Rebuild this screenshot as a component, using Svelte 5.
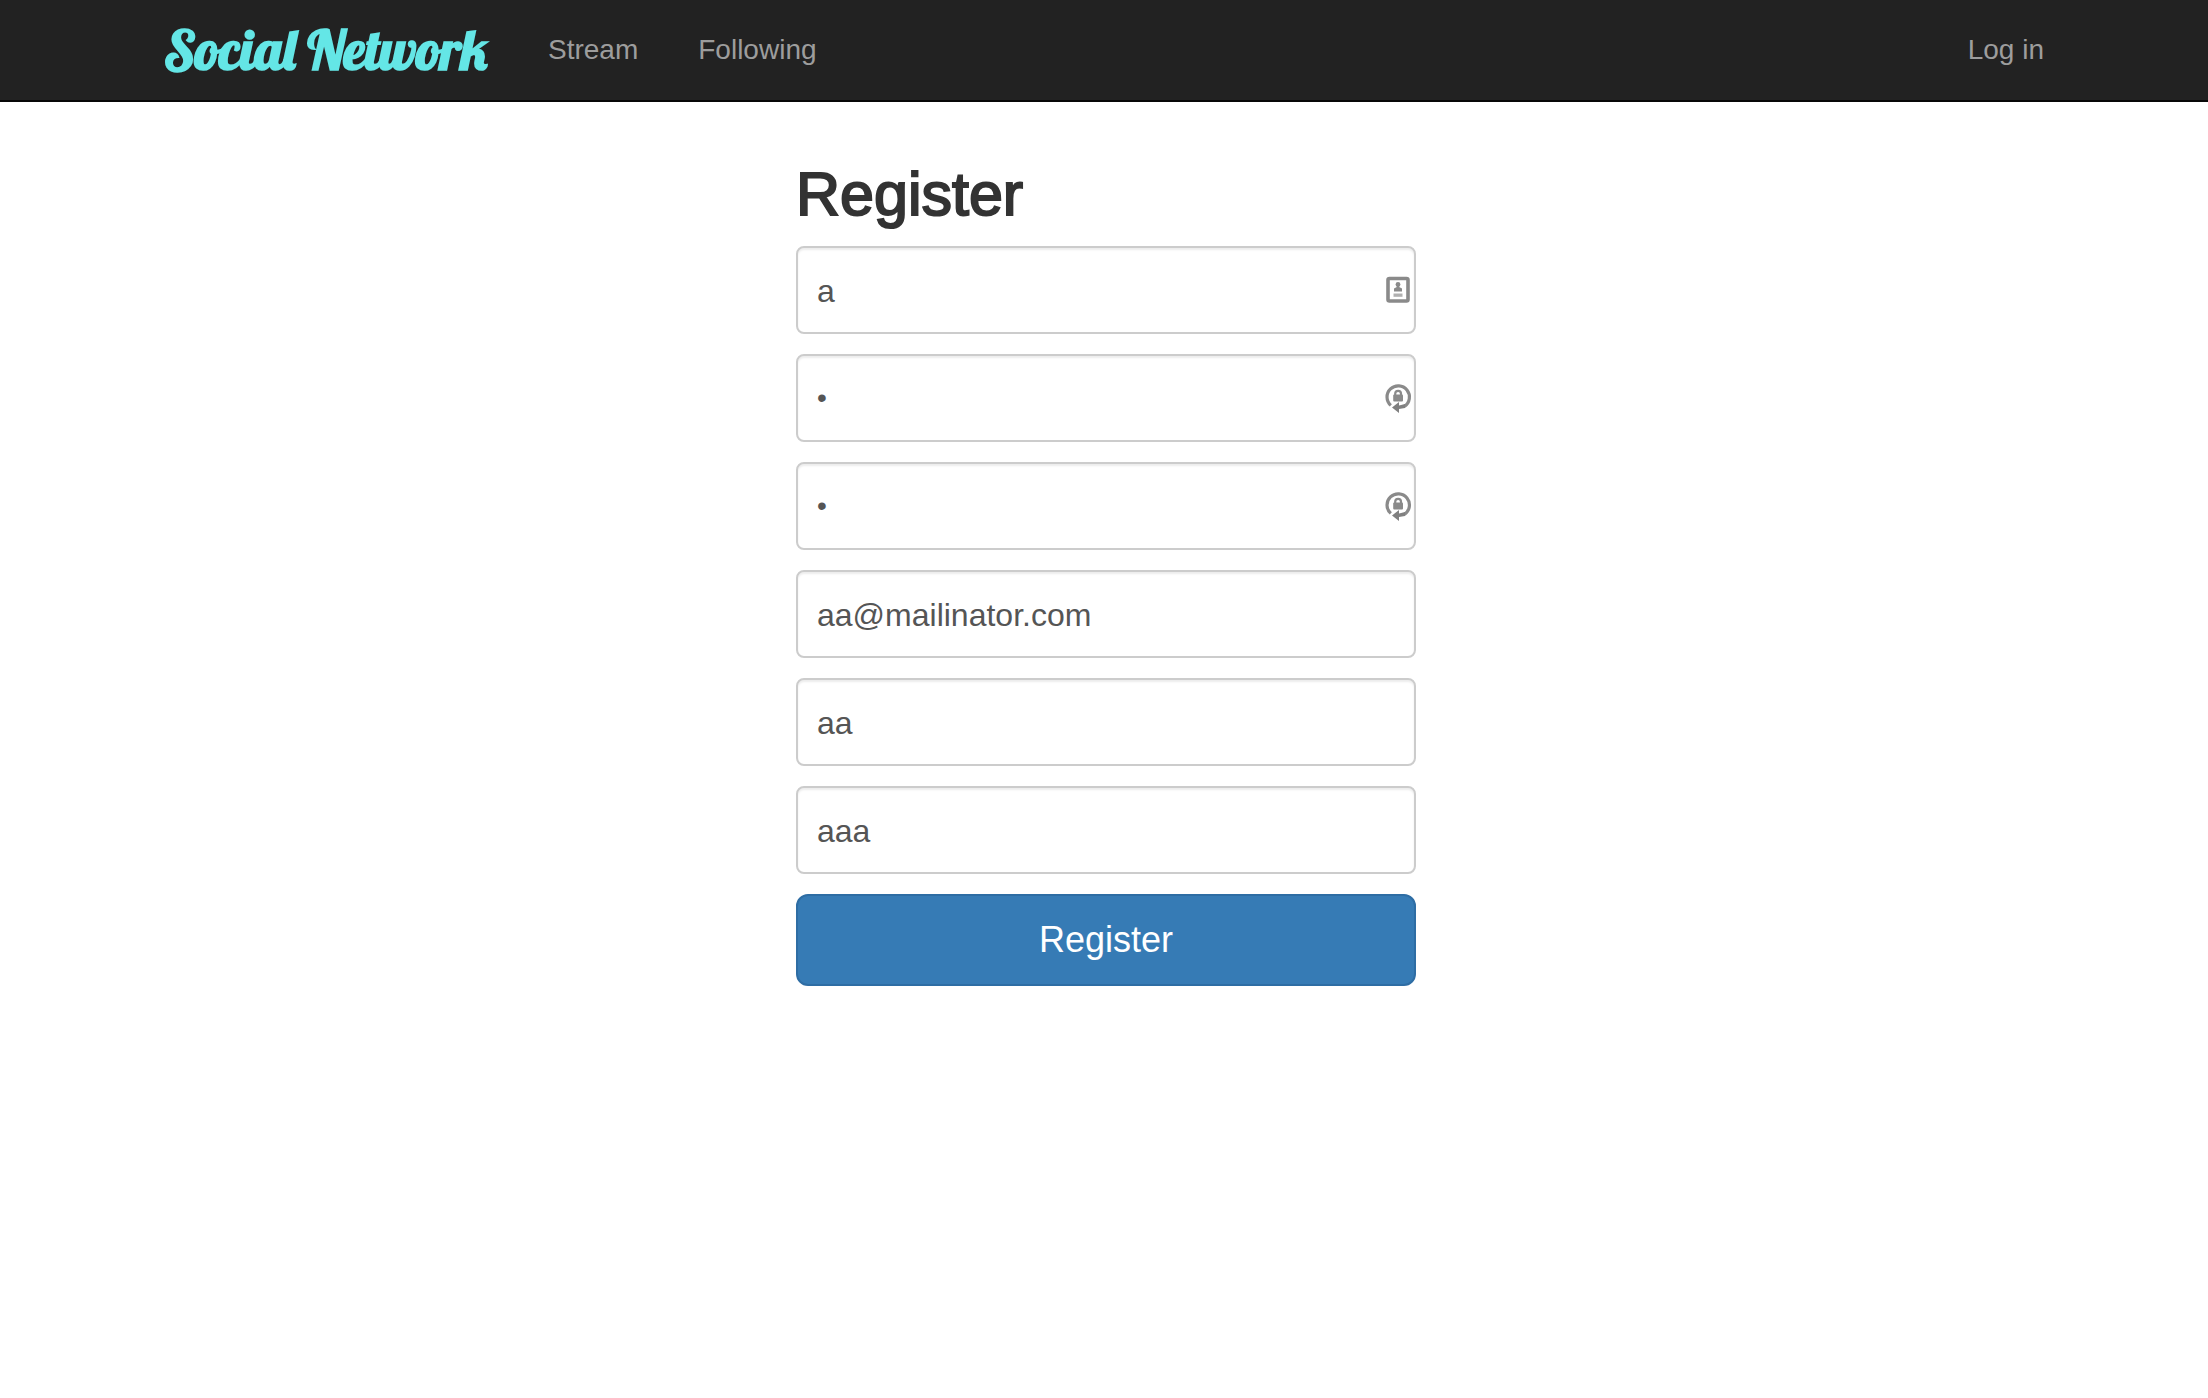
<script>
  let fields = $state([
    { id: 'username', label: 'Username', type: 'text', value: 'a', icon: 'card' },
    { id: 'password', label: 'Password', type: 'password', value: 'a', icon: 'lock' },
    { id: 'confirm', label: 'Confirm password', type: 'password', value: 'a', icon: 'lock' },
    { id: 'email', label: 'Email', type: 'email', value: 'aa@mailinator.com' },
    { id: 'first-name', label: 'First name', type: 'text', value: 'aa' },
    { id: 'last-name', label: 'Last name', type: 'text', value: 'aaa' }
  ]);
</script>

<header class="navbar">
  <nav class="container">
    <a class="brand" href="#home">Social Network</a>
    <a class="link" href="#stream">Stream</a>
    <a class="link" href="#following">Following</a>
    <a class="link login" href="#login">Log in</a>
  </nav>
</header>

<main>
  <form onsubmit={(e) => e.preventDefault()}>
    <h2>Register</h2>
    {#each fields as field (field.id)}
      <div class="field">
        <input
          id={field.id}
          type={field.type}
          aria-label={field.label}
          autocomplete="off"
          spellcheck="false"
          bind:value={field.value}
        />
        {#if field.icon === 'card'}
          <svg class="icon" viewBox="0 0 28 28" aria-hidden="true">
            <rect x="4" y="2.5" width="20" height="22.5" rx="1.5" fill="none" stroke="#8a8a8a" stroke-width="3.6" />
            <circle cx="14" cy="8.5" r="2.4" fill="#8a8a8a" />
            <path d="M12.8 9.5h2.4V11l2.8 1.500v3h-8v-3l2.800-1.500z" fill="#8a8a8a" />
            <path d="M9.5 17.500h9v3.300h-9z" fill="#b0b0b0" />
          </svg>
        {:else if field.icon === 'lock'}
          <svg class="icon" viewBox="0 0 28 28" aria-hidden="true">
            <path d="M6.8 21.400A11.200 11.200 0 1 1 20.500 22.300" fill="none" stroke="#8a8a8a" stroke-width="3.2" />
            <path d="M8 23.500l7-5.500v3.500l6-1.500v4l-6 1v4z" fill="#808080" />
            <path d="M11.200 12V9.800a2.900 3 0 0 1 5.800 0V12" fill="none" stroke="#8a8a8a" stroke-width="2.2" />
            <rect x="9.200" y="10.500" width="9.800" height="7" rx="1" fill="#8a8a8a" />
          </svg>
        {/if}
      </div>
    {/each}
    <button type="submit">Register</button>
  </form>
</main>

<style>
  :global(body) {
    margin: 0;
    background: #fff;
    font-family: "Helvetica Neue", "Liberation Sans", Arial, sans-serif;
  }
  .navbar {
    background: #222;
    border-bottom: 2px solid #080808;
  }
  .container {
    display: flex;
    align-items: center;
    max-width: 1880px;
    height: 100px;
    margin: 0 auto;
  }
  .brand {
    width: 324px;
    margin-right: 30px;
    color: #64e6e6;
    font: 700 55px/60px Lobster, "Liberation Serif", serif;
    white-space: nowrap;
    text-decoration: none;
  }
  .link {
    padding: 30px;
    color: #9d9d9d;
    font-size: 28px;
    line-height: 40px;
    text-decoration: none;
  }
  .login {
    margin-left: auto;
    padding-right: 0;
  }
  main {
    display: flex;
    justify-content: center;
    padding: 60px 0 40px 4px;
  }
  form {
    display: flex;
    flex-direction: column;
    gap: 20px;
    width: 620px;
    max-width: 100%;
  }
  h2 {
    margin: 0;
    color: #333;
    font-size: 61px;
    font-weight: 400;
    line-height: 64px;
    -webkit-text-stroke: 2px #333;
  }
  .field {
    position: relative;
    display: flex;
  }
  input {
    box-sizing: border-box;
    width: 100%;
    height: 88px;
    padding: 2px 19px 0;
    border: 2px solid #ccc;
    border-radius: 8px;
    background: #fff;
    box-shadow: inset 0 2px 2px rgba(0, 0, 0, 0.075);
    color: #555;
    font-family: inherit;
    font-size: 32px;
    outline: none;
  }
  input[type="password"] {
    padding-top: 0;
    font-size: 28px;
  }
  .icon {
    position: absolute;
    top: 30px;
    right: 4px;
    width: 28px;
    height: 28px;
    overflow: visible;
  }
  button {
    height: 92px;
    padding: 0 32px;
    border: 2px solid #2e6da4;
    border-radius: 12px;
    background: #367bb5;
    color: #fff;
    font-family: inherit;
    font-size: 36px;
    cursor: pointer;
  }
</style>
